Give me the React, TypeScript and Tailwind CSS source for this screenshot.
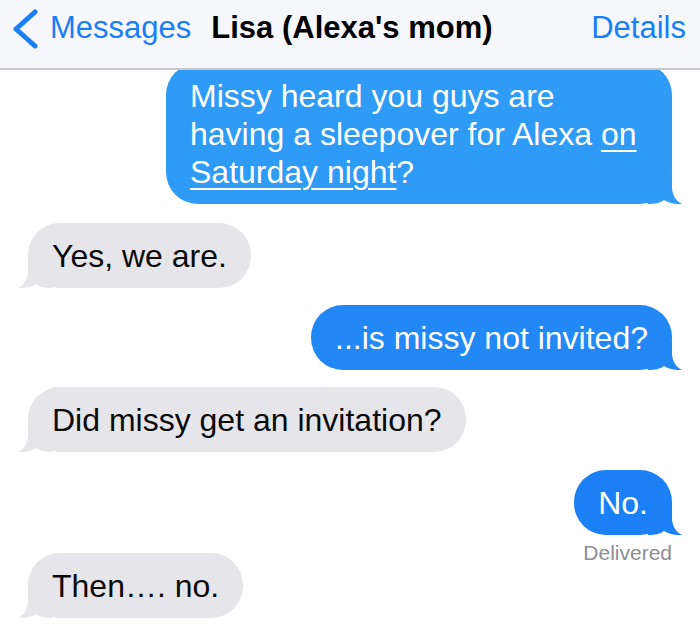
import React from "react";

type Msg = {
  from: "me" | "them";
  text: React.ReactNode;
  gap: string;
  color?: string;
  width?: string;
};

// tail drawn in the bubble's bottom corner
function Tail({ side, fill }: { side: "me" | "them"; fill: string }) {
  if (side === "them") {
    return (
      <svg className="absolute bottom-0 left-[-10px] w-[34px] h-[30px]" viewBox="0 0 34 30">
        <path d="M10,0 L10,13 C10,21 6,27 0,30 C7,30.5 13,29 18,26 C22,29 27,30 34,30 L34,0 Z" fill={fill} />
      </svg>
    );
  }
  return (
    <svg className="absolute bottom-0 right-[-10px] w-[34px] h-[30px]" viewBox="0 0 34 30">
      <path d="M24,0 L24,13 C24,21 28,27 34,30 C27,30.5 21,29 16,26 C12,29 7,30 0,30 L0,0 Z" fill={fill} />
    </svg>
  );
}

const underline = "underline decoration-[1.5px] underline-offset-[5px]";

const messages: Msg[] = [
  {
    from: "me",
    gap: "mt-[-7px]",
    color: "#2e9bf6",
    width: "w-[506px]",
    text: (
      <>
        Missy heard you guys are having a sleepover for Alexa <span className={underline}>on</span>{" "}
        <span className={underline}>Saturday night</span>?
      </>
    ),
  },
  { from: "them", gap: "mt-[19px]", text: "Yes, we are." },
  { from: "me", gap: "mt-[17px]", color: "#2188f5", text: "...is missy not invited?" },
  { from: "them", gap: "mt-[17px]", text: "Did missy get an invitation?" },
  { from: "me", gap: "mt-[18px]", color: "#1b80f5", text: "No." },
];

function Bubble({ msg }: { msg: Msg }) {
  const mine = msg.from === "me";
  const fill = mine ? msg.color ?? "#1f86f5" : "#e5e5ea";
  return (
    <div className={`flex ${mine ? "justify-end" : "justify-start"} ${msg.gap}`}>
      <div
        className={`relative rounded-[32px] px-[24px] py-[13.5px] text-[32px] leading-[38px] ${
          mine ? "text-white" : "text-[#0a0a0a]"
        } ${msg.width ?? "max-w-[506px]"}`}
        style={{ backgroundColor: fill }}
      >
        <Tail side={msg.from} fill={fill} />
        <span className="relative">{msg.text}</span>
      </div>
    </div>
  );
}

export default function App() {
  return (
    <div className="h-[629px] w-full overflow-hidden bg-white font-['Liberation_Sans',Arial,sans-serif]">
      {/* nav bar */}
      <div className="relative z-10 flex h-[70px] items-start border-b-2 border-[#c6c7c9] bg-[#f5f7fa] pt-[12px] text-[31px] leading-[31px]">
        <svg className="ml-[11px] mt-[-3px] h-[40px] w-[30px]" viewBox="0 0 30 40">
          <polyline points="24,3 5,20 24,37" fill="none" stroke="#1a7ef5" strokeWidth="5" strokeLinecap="round" strokeLinejoin="round" />
        </svg>
        <span className="ml-[9px] text-[#1a7ef5]">Messages</span>
        <span className="ml-[20px] font-bold text-black">Lisa (Alexa's mom)</span>
        <span className="ml-auto mr-[14px] text-[#1a7ef5]">Details</span>
      </div>

      {/* conversation */}
      <div className="px-[28px]">
        {messages.map((m, i) => (
          <Bubble key={i} msg={m} />
        ))}
        <div className="mt-[8px] text-right text-[21px] leading-[20px] text-[#8e8e93]">Delivered</div>
        <Bubble msg={{ from: "them", gap: "mt-[-10px]", text: "Then…. no." }} />
      </div>
    </div>
  );
}
